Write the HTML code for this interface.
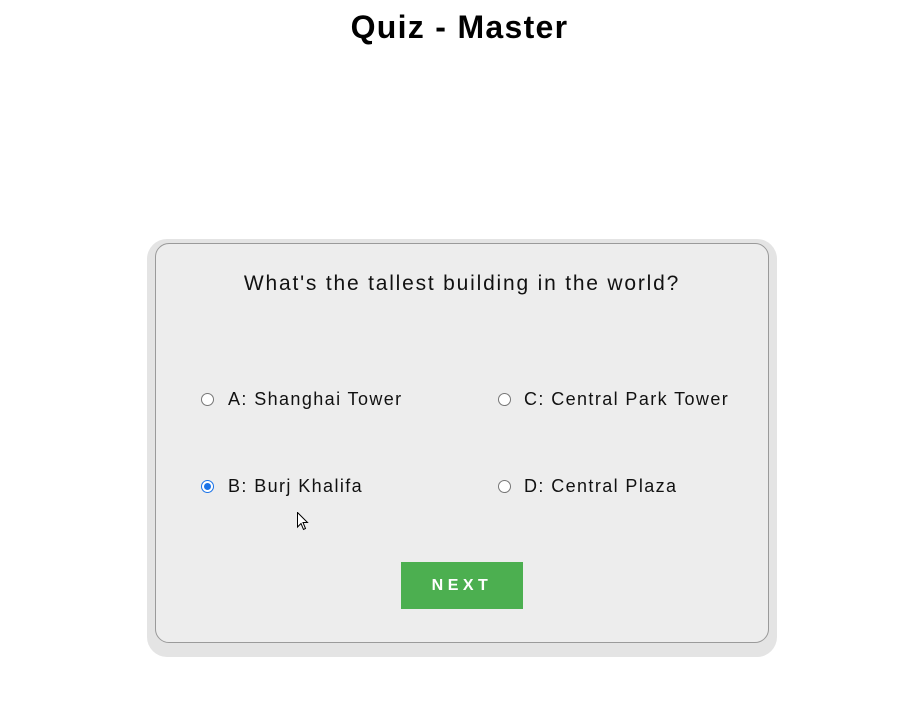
<!DOCTYPE html>
<html><head><style>
html,body{margin:0;padding:0;background:#fff;width:919px;height:727px;overflow:hidden;font-family:"Liberation Sans",sans-serif;}
h1{position:absolute;left:0;width:919px;top:6px;margin:0;text-align:center;font-size:32px;font-weight:bold;color:#000;line-height:42px;letter-spacing:1.3px;}
.outer{position:absolute;left:147px;top:239px;width:630px;height:418px;background:#e4e4e4;border-radius:20px;}
.card{position:absolute;left:155px;top:243px;width:612px;height:398px;background:#ededed;border:1px solid #9a9a9a;border-radius:14px;}
.q{position:absolute;left:0;width:612px;top:28px;text-align:center;font-size:21px;color:#111;letter-spacing:1.8px;}
.opt{position:absolute;font-size:18px;color:#111;line-height:22px;letter-spacing:1.4px;}
.r{position:absolute;width:11px;height:11px;border:1px solid #777;border-radius:50%;background:#fff;}
.r.on{border-color:#1a73e8;}
.r.on::after{content:"";position:absolute;left:2px;top:2px;width:7px;height:7px;border-radius:50%;background:#1a73e8;}
.btn{position:absolute;left:245px;top:318px;width:122px;height:47px;background:#4caf50;color:#fff;font-weight:bold;font-size:16px;letter-spacing:4.5px;text-align:center;line-height:47px;}
</style></head><body>
<h1>Quiz - Master</h1>
<div class="outer"></div>
<div class="card">
<div class="q">What's the tallest building in the world?</div>
<div class="r" style="left:45px;top:149px"></div><div class="opt" style="left:72px;top:144px">A: Shanghai Tower</div>
<div class="r" style="left:342px;top:149px"></div><div class="opt" style="left:368px;top:144px">C: Central Park Tower</div>
<div class="r on" style="left:45px;top:236px"></div><div class="opt" style="left:72px;top:231px">B: Burj Khalifa</div>
<div class="r" style="left:342px;top:236px"></div><div class="opt" style="left:368px;top:231px">D: Central Plaza</div>
<div class="btn">NEXT</div>
</div>
<svg style="position:absolute;left:297px;top:512px" width="12" height="19" viewBox="0 0 12 19"><path d="M0.5 0.5 L0.5 15 L4 11.5 L6.5 17.5 L8.5 16.5 L6 10.5 L10.5 10.5 Z" fill="#fff" stroke="#000" stroke-width="1"/></svg>
</body></html>
